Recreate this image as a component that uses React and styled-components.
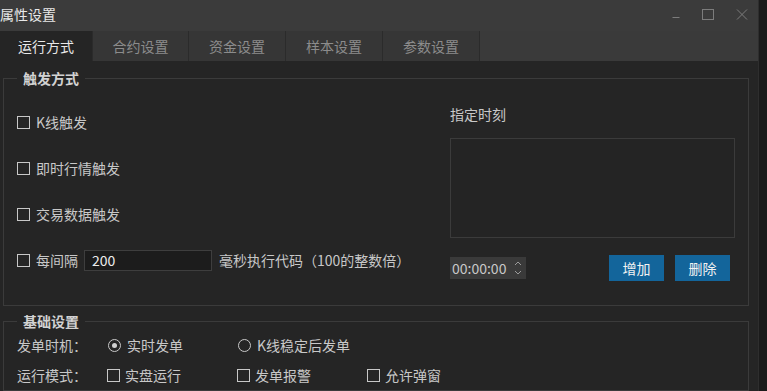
import React from "react";
import styled, { createGlobalStyle } from "styled-components";

const GlobalStyle = createGlobalStyle`
  html, body {
    margin: 0;
    background: #1b1b1b;
  }
  body {
    font-family: "Noto Sans CJK SC", "Noto Sans", sans-serif;
    font-size: 14px;
    color: #c8c8c8;
  }
`;

const Screen = styled.div`
  display: flex;
  width: 767px;
  height: 391px;
  overflow: hidden;
`;

const Window = styled.div`
  width: 758px;
  display: flex;
  flex-direction: column;
  background: #252525;
`;

const Edge = styled.div`
  flex: 1;
  background: #1b1b1b;
  border-left: 1px solid #2e2e2e;
`;

const TitleBar = styled.div`
  height: 31px;
  display: flex;
  align-items: flex-start;
  justify-content: space-between;
  background: #3b3b3b;
`;

const Title = styled.span`
  color: #e8e8e8;
  line-height: 18px;
  padding-top: 5px;
`;

const Controls = styled.div`
  display: flex;
`;

const ControlButton = styled.div`
  width: 33px;
  height: 31px;
  display: flex;
  justify-content: center;
  padding-top: 8px;
  box-sizing: border-box;
`;

const TabBar = styled.div`
  height: 30px;
  display: flex;
  background: #3a3a3a;
`;

const Tab = styled.div`
  width: ${(p) => p.$w}px;
  border-right: 1px solid #2b2b2b;
  display: flex;
  align-items: center;
  justify-content: center;
  background: ${(p) => (p.$active ? "#252525" : "#363636")};
  color: ${(p) => (p.$active ? "#e8e8e8" : "#8c8c8c")};
  line-height: 18px;
`;

const Content = styled.div`
  flex: 1;
  display: flex;
  flex-direction: column;
  gap: 6px;
  padding: 8px 9px 0 3px;
`;

const Group = styled.fieldset`
  margin: 0;
  padding: 0 13px;
  min-width: 0;
  border: 1px solid #3b3b3b;
`;

const Legend = styled.legend`
  padding: 0 6px;
  font-weight: bold;
  color: #d2d2d2;
  line-height: 18px;
`;

const TriggerBody = styled.div`
  display: flex;
  height: 218px;
`;

const LeftCol = styled.div`
  flex: 1;
  padding-top: 12px;
`;

const CheckRow = styled.div`
  height: 46px;
  display: flex;
  align-items: center;
`;

const CheckLabel = styled.label`
  display: flex;
  align-items: center;
  gap: ${(p) => p.$gap || 6}px;
  line-height: 18px;
  width: ${(p) => (p.$w ? `${p.$w}px` : "auto")};
`;

const Box = styled.span`
  width: 13px;
  height: 13px;
  box-sizing: border-box;
  border: 1px solid #c8c8c8;
  flex-shrink: 0;
`;

const Radio = styled.span`
  width: 13px;
  height: 13px;
  box-sizing: border-box;
  border: 1px solid #c8c8c8;
  border-radius: 50%;
  display: flex;
  align-items: center;
  justify-content: center;
  flex-shrink: 0;
  &::after {
    content: "";
    width: 5px;
    height: 5px;
    border-radius: 50%;
    background: ${(p) => (p.$checked ? "#d0d0d0" : "transparent")};
  }
`;

const NumberInput = styled.input`
  width: 128px;
  height: 21px;
  box-sizing: border-box;
  margin: 0 7px 0 6px;
  padding: 0 0 0 7px;
  background: #1c1c1c;
  border: 1px solid #3e3e3e;
  color: #ececec;
  font: inherit;
  outline: none;
`;

const RightCol = styled.div`
  width: 285px;
  display: flex;
  flex-direction: column;
  padding-top: 18px;
`;

const FieldLabel = styled.div`
  line-height: 18px;
`;

const ListBox = styled.div`
  margin-top: 15px;
  height: 100px;
  box-sizing: border-box;
  border: 1px solid #3b3b3b;
  background: #242424;
`;

const TimeRow = styled.div`
  margin-top: 17px;
  height: 26px;
  display: flex;
  align-items: center;
  gap: 11px;
  padding-right: 5px;
`;

const TimeEdit = styled.div`
  width: 76px;
  height: 22px;
  background: #3a3a3a;
  display: flex;
  align-items: center;
  justify-content: space-between;
  padding: 0 4px 0 2px;
  box-sizing: border-box;
  margin-right: auto;
  color: #c8c8c8;
  line-height: 18px;
`;

const Button = styled.button`
  width: 55px;
  height: 26px;
  border: none;
  background: #13659b;
  color: #f2f2f2;
  font: inherit;
  line-height: 18px;
  padding: 0;
`;

const BasicBody = styled.div`
  display: flex;
  flex-direction: column;
`;

const OptionRow = styled.div`
  height: 30px;
  display: flex;
  align-items: center;
`;

const RowLabel = styled.span`
  width: ${(p) => p.$w}px;
  line-height: 18px;
`;

const TitleControls = () => (
  <Controls>
    <ControlButton>
      <svg width="10" height="12" viewBox="0 0 10 12">
        <path d="M1.5 9.5h7" stroke="#7c7c7c" strokeWidth="1" />
      </svg>
    </ControlButton>
    <ControlButton>
      <svg width="13" height="12" viewBox="0 0 13 12">
        <rect x="0.5" y="1.5" width="11" height="10" fill="none" stroke="#7c7c7c" strokeWidth="1" />
      </svg>
    </ControlButton>
    <ControlButton>
      <svg width="12" height="12" viewBox="0 0 12 12">
        <path d="M1 1.5l10 10M11 1.5l-10 10" stroke="#7c7c7c" strokeWidth="1" />
      </svg>
    </ControlButton>
  </Controls>
);

const Spinner = () => (
  <svg width="8" height="16" viewBox="0 0 8 16">
    <path d="M1 5l3-3 3 3M1 11l3 3 3-3" fill="none" stroke="#9a9a9a" strokeWidth="1" />
  </svg>
);

const tabs = [
  { label: "运行方式", w: 92 },
  { label: "合约设置", w: 95 },
  { label: "资金设置", w: 96 },
  { label: "样本设置", w: 96 },
  { label: "参数设置", w: 96 },
];

export default function App() {
  return (
    <Screen>
      <GlobalStyle />
      <Window>
        <TitleBar>
          <Title>属性设置</Title>
          <TitleControls />
        </TitleBar>
        <TabBar>
          {tabs.map((t, i) => (
            <Tab key={t.label} $w={t.w} $active={i === 0}>
              {t.label}
            </Tab>
          ))}
        </TabBar>
        <Content>
          <Group>
            <Legend>触发方式</Legend>
            <TriggerBody>
              <LeftCol>
                <CheckRow>
                  <CheckLabel>
                    <Box />
                    K线触发
                  </CheckLabel>
                </CheckRow>
                <CheckRow>
                  <CheckLabel>
                    <Box />
                    即时行情触发
                  </CheckLabel>
                </CheckRow>
                <CheckRow>
                  <CheckLabel>
                    <Box />
                    交易数据触发
                  </CheckLabel>
                </CheckRow>
                <CheckRow>
                  <CheckLabel>
                    <Box />
                    每间隔
                  </CheckLabel>
                  <NumberInput readOnly value="200" />
                  <span>毫秒执行代码（100的整数倍）</span>
                </CheckRow>
              </LeftCol>
              <RightCol>
                <FieldLabel>指定时刻</FieldLabel>
                <ListBox />
                <TimeRow>
                  <TimeEdit>
                    <span>00:00:00</span>
                    <Spinner />
                  </TimeEdit>
                  <Button>增加</Button>
                  <Button>删除</Button>
                </TimeRow>
              </RightCol>
            </TriggerBody>
          </Group>
          <Group>
            <Legend>基础设置</Legend>
            <BasicBody>
              <OptionRow>
                <RowLabel $w={91}>发单时机：</RowLabel>
                <CheckLabel $w={130}>
                  <Radio $checked />
                  实时发单
                </CheckLabel>
                <CheckLabel>
                  <Radio />
                  K线稳定后发单
                </CheckLabel>
              </OptionRow>
              <OptionRow>
                <RowLabel $w={90}>运行模式：</RowLabel>
                <CheckLabel $w={130} $gap={5}>
                  <Box />
                  实盘运行
                </CheckLabel>
                <CheckLabel $w={130} $gap={5}>
                  <Box />
                  发单报警
                </CheckLabel>
                <CheckLabel $gap={5}>
                  <Box />
                  允许弹窗
                </CheckLabel>
              </OptionRow>
            </BasicBody>
          </Group>
        </Content>
      </Window>
      <Edge />
    </Screen>
  );
}
